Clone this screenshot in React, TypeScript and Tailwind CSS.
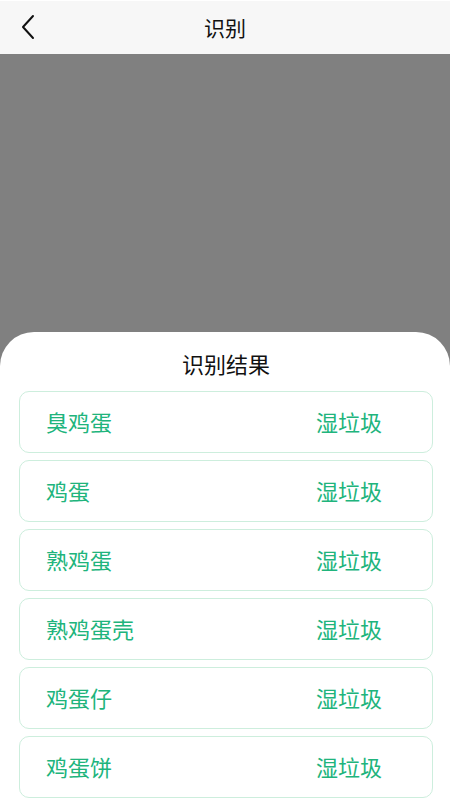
const results = [
  { name: "臭鸡蛋", type: "湿垃圾" },
  { name: "鸡蛋", type: "湿垃圾" },
  { name: "熟鸡蛋", type: "湿垃圾" },
  { name: "熟鸡蛋壳", type: "湿垃圾" },
  { name: "鸡蛋仔", type: "湿垃圾" },
  { name: "鸡蛋饼", type: "湿垃圾" },
]

export default function App() {
  return (
    <div
      className="w-[450px] h-[800px] flex flex-col bg-[#808080] overflow-hidden"
      style={{ fontFamily: '"Noto Sans CJK SC", "Noto Sans", sans-serif' }}
    >
      {/* Header */}
      <div className="h-[54px] shrink-0 bg-[#f7f7f7] border-t border-white relative flex items-center justify-center">
        <button className="absolute left-[16px] top-[12px] w-[24px] h-[28px] flex items-center justify-center">
          <svg width="16" height="26" viewBox="0 0 16 26" fill="none">
            <polyline
              points="13,2 3,13 13,24"
              stroke="#111"
              strokeWidth="2"
              strokeLinecap="round"
              strokeLinejoin="round"
            />
          </svg>
        </button>
        <h1 className="text-[21px] text-[#111] leading-none">识别</h1>
      </div>

      {/* Camera preview */}
      <div className="h-[278px] shrink-0" />

      {/* Result sheet */}
      <div className="flex-1 bg-white rounded-t-[34px] pl-[19px] pr-[17px]">
        <h2 className="text-center text-[22px] text-[#111] leading-none pt-[20px] pb-[17px]">
          识别结果
        </h2>
        <div className="flex flex-col gap-[7px]">
          {results.map((r) => (
            <div
              key={r.name}
              className="h-[62px] rounded-[10px] border border-[#cdeedd] flex items-center justify-between pl-[26px] pr-[50px] pb-[3px]"
            >
              <span className="text-[22px] text-[#20b47c] leading-none">{r.name}</span>
              <span className="text-[22px] text-[#20b47c] leading-none">{r.type}</span>
            </div>
          ))}
        </div>
      </div>
    </div>
  )
}
